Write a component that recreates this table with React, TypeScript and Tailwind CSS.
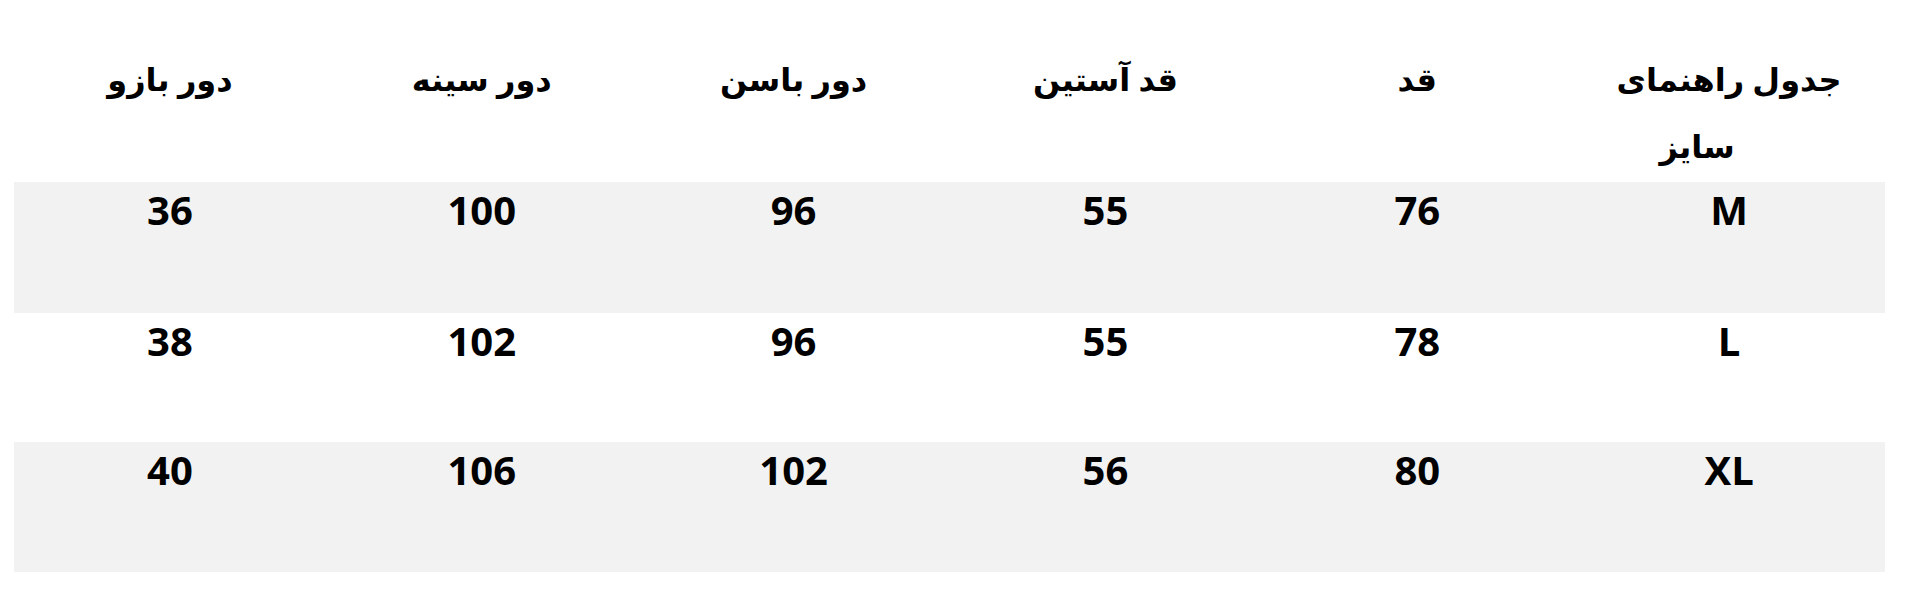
const headers = ["جدول راهنمای سایز", "قد", "قد آستین", "دور باسن", "دور سینه", "دور بازو"];

const rows = [
  { size: "M", values: ["76", "55", "96", "100", "36"], shaded: true, h: "h-[131px]" },
  { size: "L", values: ["78", "55", "96", "102", "38"], shaded: false, h: "h-[129px]" },
  { size: "XL", values: ["80", "56", "102", "106", "40"], shaded: true, h: "h-[130px]" },
];

export default function App() {
  return (
    <div className="w-[1912px] h-[609px] bg-white font-['Open_Sans','DejaVu_Sans',sans-serif] text-black">
      <div dir="rtl" className="ml-[14px] w-[1871px] flex flex-col">
        {/* header */}
        <div className="grid grid-cols-6 h-[182px]">
          {headers.map((h, i) => (
            <div key={i} className="flex justify-center pt-[45px]">
              {i === 0 ? (
                <div className="text-[32px] leading-[67px] font-bold text-center">
                  <div>جدول راهنمای</div>
                  <div className="pr-[64px]">سایز</div>
                </div>
              ) : (
                <span className="text-[32px] leading-[67px] font-bold">{h}</span>
              )}
            </div>
          ))}
        </div>

        {/* rows */}
        {rows.map((r) => (
          <div key={r.size} className={`grid grid-cols-6 ${r.h} ${r.shaded ? "bg-[#f2f2f2]" : "bg-white"}`}>
            {[r.size, ...r.values].map((v, i) => (
              <div key={i} className="flex justify-center pt-1">
                <span className="text-[40px] leading-[48px] font-bold">{v}</span>
              </div>
            ))}
          </div>
        ))}
      </div>
    </div>
  );
}
